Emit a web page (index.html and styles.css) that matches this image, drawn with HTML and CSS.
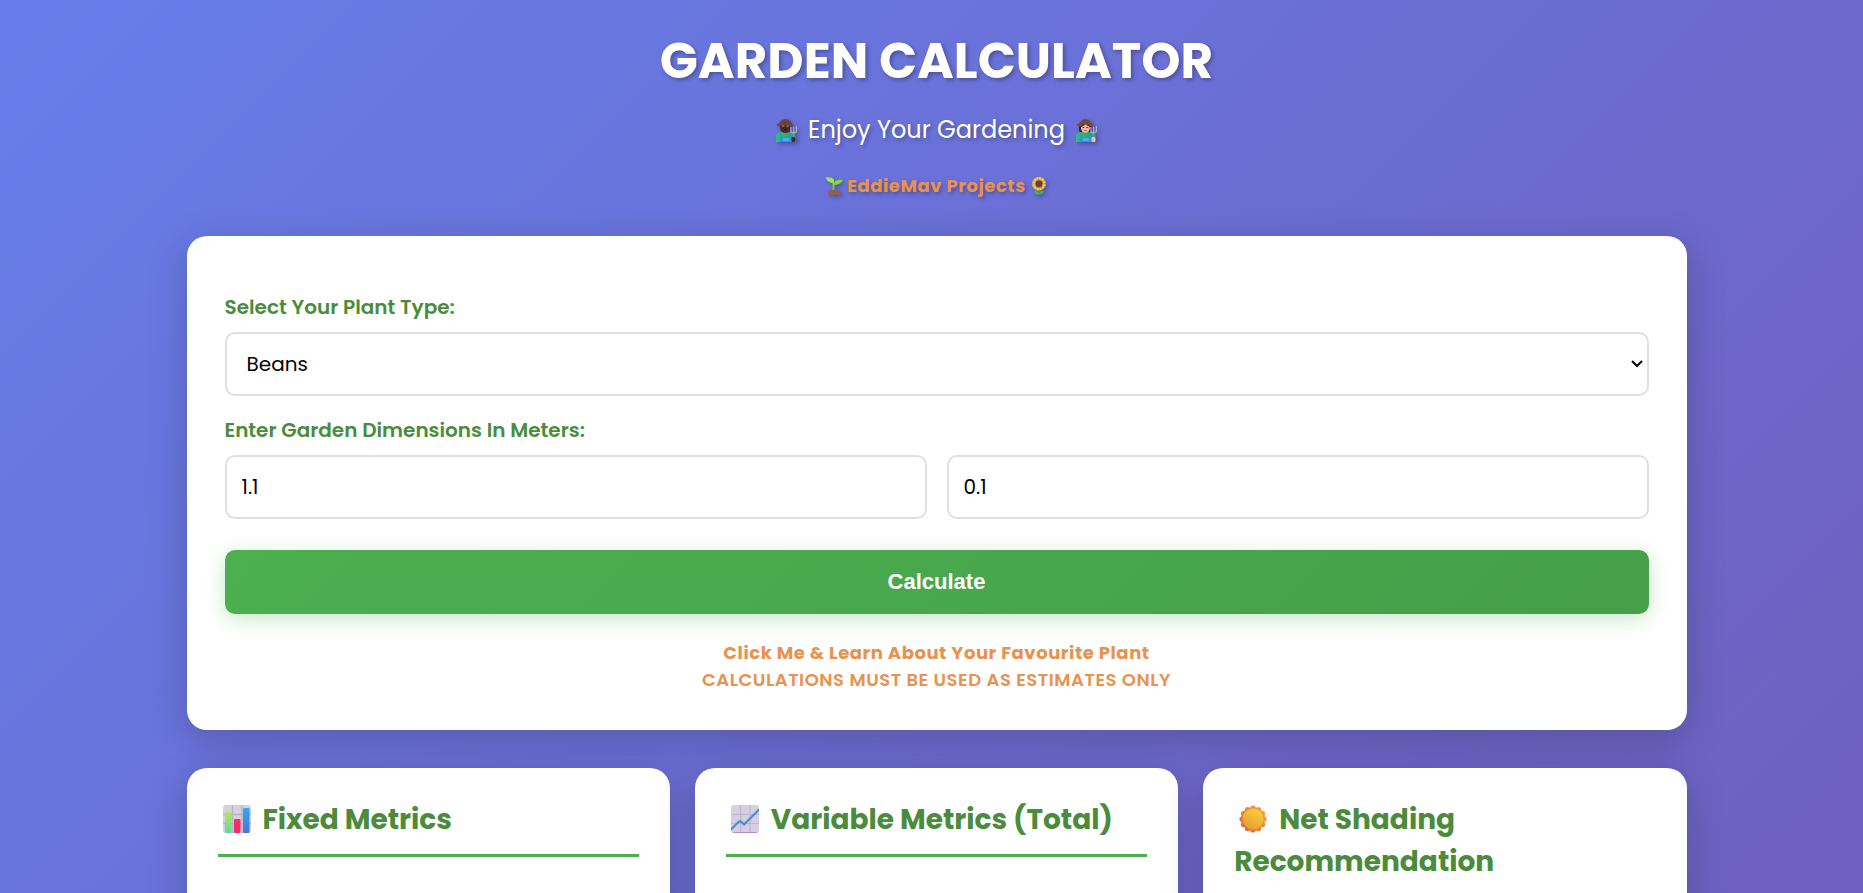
FILE: index.html
```html
<!DOCTYPE html>
<html lang="en">
<head>
  <meta charset="UTF-8">
  <meta name="viewport" content="width=device-width, initial-scale=1.0">
  <title>Garden Calculator</title>
  <link rel="stylesheet" href="styles.css">
</head>
<body>
  <!-- shared gradients and the gardener's clothes -->
  <svg class="defs" aria-hidden="true">
    <defs>
      <linearGradient id="shirt" x1="0" y1="0" x2="1" y2="0">
        <stop offset="0" stop-color="#2fc07a"/>
        <stop offset="1" stop-color="#359a62"/>
      </linearGradient>
      <linearGradient id="paper" x1="0" y1="0" x2="0" y2="1">
        <stop offset="0" stop-color="#d5d1dd"/>
        <stop offset="1" stop-color="#d9cbe6"/>
      </linearGradient>
      <linearGradient id="barGreen" x1="0" y1="0" x2="0" y2="1">
        <stop offset="0" stop-color="#b4e85c"/>
        <stop offset="1" stop-color="#5cd99a"/>
      </linearGradient>
      <linearGradient id="barBlue" x1="0" y1="0" x2="0" y2="1">
        <stop offset="0" stop-color="#35a8f5"/>
        <stop offset="1" stop-color="#4478d0"/>
      </linearGradient>
      <linearGradient id="sunCore" x1="0.8" y1="0" x2="0.2" y2="1">
        <stop offset="0" stop-color="#ffd23a"/>
        <stop offset="1" stop-color="#dd9c30"/>
      </linearGradient>
      <linearGradient id="sunRays" gradientUnits="userSpaceOnUse" x1="24" y1="4" x2="4" y2="24">
        <stop offset="0" stop-color="#ff9a35"/>
        <stop offset="1" stop-color="#e5663b"/>
      </linearGradient>
      <g id="clothes">
        <path d="M0 23v-5c0-3 2-5 5-5h8c3 0 5 2 5 5v5z" fill="url(#shirt)"/>
        <path d="M5 14v4h7v-4h2v5l1 4H3l1-4v-5z" fill="#2492ee"/>
        <rect x="6" y="19" width="6" height="3" rx="1" fill="#45b0fa"/>
      </g>
      <g id="fork">
        <path d="M16 13v7" stroke="#8d86a5" stroke-width="1" fill="none"/>
        <path d="M13.500 8v4q0 2 2.500 2t2.500-2V7M16 8v6" stroke="#b3adca" stroke-width="1.100" fill="none"/>
      </g>
    </defs>
  </svg>

  <div class="container">
    <header>
      <h1>GARDEN CALCULATOR</h1>
      <p class="tagline">
        <svg class="icon-farmer" viewBox="0 0 19 23" preserveAspectRatio="none" aria-hidden="true">
          <use href="#clothes"/>
          <ellipse cx="8.500" cy="8.500" rx="5" ry="5.500" fill="#4a2a28"/>
          <path d="M0.500 5.500Q3 5 4 2.500Q5.500 0 8.500 0t4.500 2.500q1 2.500 3 3.500-1.500 2-3.500 1-4-2-8 0-2.500 1.500-4-1.500z" fill="#6f4238"/>
          <path d="M5.500 7h2M9.500 7h2" stroke="#b99a93" stroke-width="1"/>
          <path d="M7 10.500h3" stroke="#2b1717" stroke-width="1"/>
          <use href="#fork"/>
          <rect x="14" y="18" width="3.500" height="5" rx="1" fill="#4a2a28"/>
        </svg>
        <span>Enjoy Your Gardening</span>
        <svg class="icon-farmer" viewBox="0 0 19 23" preserveAspectRatio="none" aria-hidden="true">
          <path d="M3 6q-1 5 1 8.500h9q2-4 1-8.500z" fill="#38242b"/>
          <use href="#clothes"/>
          <ellipse cx="8.500" cy="9" rx="4" ry="4.800" fill="#eab9a2"/>
          <path d="M4.500 8q3-1 4-3 2 2 4 3V4h-8z" fill="#38242b"/>
          <path d="M0.500 5.500Q3 5 4 2.500Q5.500 0 8.500 0t4.500 2.500q1 2.500 3 3.500-1.500 2-3.500 1-4-3-8 0-2.500 1.500-4-1.500z" fill="#7a473b"/>
          <path d="M6 8.500h1.500M9.500 8.500h1.500" stroke="#4c3034" stroke-width="1"/>
          <path d="M7.500 11.500h2" stroke="#d2566b" stroke-width="1"/>
          <use href="#fork"/>
          <rect x="14" y="18" width="3.500" height="5" rx="1" fill="#edbfa5"/>
        </svg>
      </p>
      <p class="brand">
        <svg class="icon-plant" viewBox="0 0 16 18" preserveAspectRatio="none" aria-hidden="true">
          <path d="M2.500 18q0-6 5.500-6t6 6z" fill="#8f5c58"/>
          <path d="M7.500 13V6" stroke="#6ed13a" stroke-width="1.600"/>
          <path d="M8 6.500Q2 5.500 0.500 0.500 6-.5 8 2.500z" fill="#9be745"/>
          <path d="M7.500 7Q9 2 16 3q-2 5-8.500 5z" fill="#84d83b"/>
        </svg>
        <a class="highlight" href="#">EddieMav Projects</a>
        <svg class="icon-plant" viewBox="0 0 16 18" aria-hidden="true">
          <path d="M8 11v7" stroke="#3f9b48" stroke-width="1.600"/>
          <path d="M8 17q-4 1-5-3 4-1 5 3 1-4 5-3-1 4-5 3z" fill="#4caf50"/>
          <circle cx="8" cy="6.800" r="5.500" fill="none" stroke="#f7cc3c" stroke-width="2.600" stroke-dasharray="2.500 .3"/>
          <circle cx="8" cy="6.800" r="4.300" fill="#f0bd3a"/>
          <circle cx="8" cy="6.800" r="3.600" fill="#6b3a3c"/>
        </svg>
      </p>
    </header>

    <form class="card calculator">
      <label for="plant">Select Your Plant Type:</label>
      <div class="select-wrap">
        <select id="plant">
          <option>Beans</option>
          <option>Cabbage</option>
          <option>Carrots</option>
          <option>Tomatoes</option>
        </select>
        <svg class="arrow" viewBox="0 0 12 8" aria-hidden="true">
          <path d="M1 1l5 5 5-5" fill="none" stroke="black" stroke-width="2"/>
        </svg>
      </div>

      <label for="gardenLength">Enter Garden Dimensions In Meters:</label>
      <div class="dimensions">
        <input type="text" id="gardenLength" value="1.1">
        <input type="text" id="gardenWidth" value="0.1" aria-label="Garden width">
      </div>

      <button type="button" class="calculate-btn">Calculate</button>

      <div class="notes">
        <a class="highlight" href="#">Click Me &amp; Learn About Your Favourite Plant</a>
        <p class="disclaimer">CALCULATIONS MUST BE USED AS ESTIMATES ONLY</p>
      </div>
    </form>

    <div class="results">
      <section class="card result">
        <h2>
          <svg class="icon-title" viewBox="0 0 28 28" aria-hidden="true">
            <rect width="28" height="28" rx="3" fill="url(#paper)"/>
            <path d="M0 9.500h28M0 18.500h28M9.500 0v28M19 0v28" stroke="#b9b3c0" stroke-width="1.300"/>
            <rect x="2" y="7" width="6.500" height="21" rx="1" fill="url(#barGreen)"/>
            <rect x="11" y="14" width="6.500" height="14" rx="1" fill="#ee2f6b"/>
            <rect x="20" y="3" width="6.500" height="25" rx="1" fill="url(#barBlue)"/>
          </svg>Fixed Metrics
        </h2>
      </section>
      <section class="card result">
        <h2>
          <svg class="icon-title" viewBox="0 0 28 28" aria-hidden="true">
            <rect width="28" height="28" rx="3" fill="url(#paper)"/>
            <path d="M0 9.500h28M0 18.500h28M9.500 0v28M19 0v28" stroke="#bfb7c8" stroke-width="1.200"/>
            <path d="M2 27.500h24" stroke="#b08fcb" stroke-width="1"/>
            <path d="M0 24.500l8-8h2l3 3 15-15" stroke="#3a8fd8" stroke-width="2" fill="none"/>
          </svg>Variable Metrics (Total)
        </h2>
      </section>
      <section class="card result">
        <h2>
          <svg class="icon-title" viewBox="0 0 28 28" aria-hidden="true">
            <g fill="url(#sunRays)">
              <circle cx="14" cy="14" r="12"/>
              <circle cx="14" cy="3" r="2.600"/><circle cx="19.500" cy="4.500" r="2.600"/>
              <circle cx="23.500" cy="8.500" r="2.600"/><circle cx="25" cy="14" r="2.600"/>
              <circle cx="23.500" cy="19.500" r="2.600"/><circle cx="19.500" cy="23.500" r="2.600"/>
              <circle cx="14" cy="25" r="2.600"/><circle cx="8.500" cy="23.500" r="2.600"/>
              <circle cx="4.500" cy="19.500" r="2.600"/><circle cx="3" cy="14" r="2.600"/>
              <circle cx="4.500" cy="8.500" r="2.600"/><circle cx="8.500" cy="4.500" r="2.600"/>
            </g>
            <circle cx="14" cy="14" r="10.500" fill="url(#sunCore)"/>
          </svg>Net Shading Recommendation
        </h2>
      </section>
    </div>
  </div>
</body>
</html>
```

FILE: styles.css
```css
:root {
  --green: #4caf50;
  --green-text: #4a8c3b;
  --orange: #e8924f;
  --border: #e0e0e0;
}

* {
  box-sizing: border-box;
}

html {
  background: #764ba2;
}

body {
  margin: 0;
  min-height: 2700px;
  padding: 31px 10px 40px 20px;
  font-family: Poppins, Inter, sans-serif;
  font-size: 20px;
  background: linear-gradient(135deg, #667eea 0%, #764ba2 100%);
}

h1, h2, p {
  margin: 0;
}

.defs {
  position: absolute;
  width: 0;
  height: 0;
}

.container {
  max-width: 1500px;
  margin: 0 auto;
}

header {
  text-align: center;
  color: white;
  margin-bottom: 35px;
  text-shadow: 2px 2px 4px rgba(0, 0, 0, 0.3);
}

h1 {
  font-size: 50px;
  line-height: 60px;
  font-weight: 700;
}

.tagline {
  display: flex;
  justify-content: center;
  align-items: center;
  gap: 11px;
  margin-top: 19px;
  font-size: 24px;
  line-height: 40px;
}

.brand {
  display: flex;
  justify-content: center;
  align-items: center;
  gap: 4px;
  margin-top: 21px;
  line-height: 30px;
}

.highlight, .disclaimer {
  color: var(--orange);
  font-size: 18px;
  font-weight: 700;
  letter-spacing: 0.03em;
  text-decoration: none;
}

.icon-farmer {
  width: 21px;
  height: 23px;
}

.icon-plant {
  width: 18px;
  height: 18px;
}

.icon-farmer, .icon-plant {
  filter: drop-shadow(2px 2px 2px rgba(0, 0, 0, 0.3));
}

.card {
  background: white;
  border-radius: 20px;
  box-shadow: 0 10px 40px rgba(0, 0, 0, 0.2);
}

.calculator {
  padding: 56px 38px 37px;
}

label {
  display: block;
  margin-bottom: 10px;
  line-height: 30px;
  font-weight: 600;
  color: var(--green-text);
}

select, input {
  display: block;
  width: 100%;
  height: 64px;
  padding: 15px;
  border: 2px solid var(--border);
  border-radius: 10px;
  background: white;
  color: black;
  font-family: inherit;
  font-size: 20px;
}

.select-wrap {
  position: relative;
  margin-bottom: 19px;
}

select {
  appearance: none;
  padding: 15px 20px;
}

.arrow {
  position: absolute;
  top: 28px;
  right: 6px;
  width: 12px;
  height: 8px;
  pointer-events: none;
}

.dimensions {
  display: grid;
  grid-template-columns: 1fr 1fr;
  gap: 20px;
}

.calculate-btn {
  display: block;
  width: 100%;
  height: 64px;
  margin-top: 31px;
  border: none;
  border-radius: 10px;
  background: linear-gradient(135deg, #4caf50, #45a049);
  box-shadow: 0 5px 20px rgba(76, 175, 80, 0.3);
  color: white;
  font-family: Arial, "Liberation Sans", sans-serif;
  font-size: 22px;
  font-weight: 600;
  cursor: pointer;
}

.notes {
  margin-top: 25px;
  text-align: center;
  font-size: 18px;
  line-height: 27px;
}

.disclaimer {
  font-weight: 600;
}

.results {
  display: grid;
  grid-template-columns: repeat(3, 1fr);
  gap: 25px;
  margin-top: 38px;
}

.result {
  min-height: 500px;
  padding: 31px;
}

h2 {
  padding-bottom: 13px;
  border-bottom: 3px solid var(--green);
  font-size: 28px;
  line-height: 42px;
  font-weight: 700;
  color: var(--green-text);
}

.icon-title {
  width: 28px;
  height: 28px;
  margin: 0 12px 0 5px;
  vertical-align: -4px;
}
```
